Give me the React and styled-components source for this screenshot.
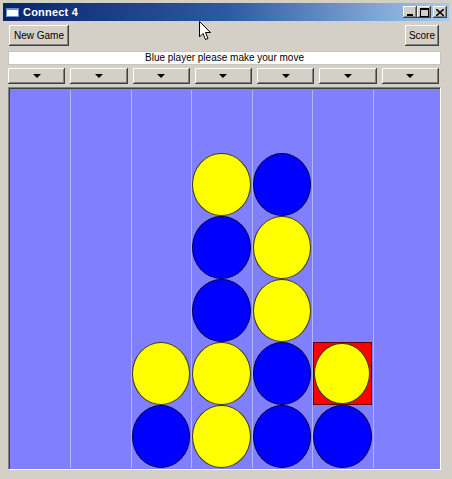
import React from "react";
import styled, { createGlobalStyle } from "styled-components";

const GlobalStyle = createGlobalStyle`
  html, body {
    margin: 0;
    padding: 0;
    background: #d4d0c8;
  }
  body {
    font-family: "Liberation Sans", Arial, sans-serif;
    font-size: 10px;
  }
`;

const Window = styled.div`
  position: relative;
  width: 452px;
  height: 479px;
  box-sizing: border-box;
  background: #d4d0c8;
  padding: 3px 3px 0 3px;
  overflow: hidden;
`;

const TitleBar = styled.div`
  height: 18px;
  display: flex;
  align-items: center;
  padding: 0 2px 0 3px;
  background: linear-gradient(to right, #0a246a 0%, #2c5aa0 50%, #a6caf0 100%);
  color: #fff;
`;

const AppIcon = styled.span`
  width: 13px;
  height: 9px;
  box-sizing: border-box;
  background: #fff;
  border: 1px solid #6b8fd1;
  border-top-width: 2px;
  margin-right: 4px;
`;

const Caption = styled.span`
  flex: 1;
  font-family: "Liberation Sans", Arial, sans-serif;
  font-weight: bold;
  font-size: 11px;
  letter-spacing: 0.2px;
`;

const CapButton = styled.span`
  width: 14px;
  height: 12px;
  margin-left: ${(p) => (p.$gap ? 2 : 0)}px;
  display: flex;
  align-items: center;
  justify-content: center;
  background: #d4d0c8;
  box-shadow: inset -1px -1px #404040, inset 1px 1px #fff, inset -2px -2px #808080;
`;

const Content = styled.div`
  padding: 4px 8px 0 5px;
  display: flex;
  flex-direction: column;
`;

const Toolbar = styled.div`
  display: flex;
  justify-content: space-between;
  padding: 0 2px 0 1px;
  height: 21px;
`;

const Button = styled.button`
  height: 21px;
  padding: 0 ${(p) => (p.$narrow ? 4 : 5)}px;
  border: none;
  background: #d4d0c8;
  font-family: "Liberation Sans", Arial, sans-serif;
  font-size: 10px;
  color: #000;
  box-shadow: inset -1px -1px #404040, inset 1px 1px #fff, inset -2px -2px #808080;
`;

const Status = styled.div`
  margin-top: 5px;
  height: 14px;
  background: #fff;
  border: 1px solid #c8c5bd;
  box-sizing: border-box;
  display: flex;
  align-items: center;
  justify-content: center;
  line-height: 12px;
  font-size: 10px;
`;

const DropRow = styled.div`
  margin-top: 3px;
  display: grid;
  grid-template-columns: repeat(7, 1fr);
  gap: 5px;
  padding-right: 2px;
`;

const DropButton = styled.button`
  height: 16px;
  border: none;
  padding: 0;
  background: #d4d0c8;
  display: flex;
  align-items: center;
  justify-content: center;
  box-shadow: inset -1px -1px #404040, inset 1px 1px #fff, inset -2px -2px #808080;
`;

const Arrow = styled.span`
  width: 0;
  height: 0;
  border-left: 4px solid transparent;
  border-right: 4px solid transparent;
  border-top: 4px solid #000;
`;

const Board = styled.div`
  margin-top: 3px;
  height: 383px;
  box-sizing: border-box;
  border-top: 1px solid #808080;
  border-left: 1px solid #808080;
  border-right: 1px solid #fff;
  border-bottom: 1px solid #fff;
  box-shadow: inset 1px 1px #404040;
  padding: 2px 7px 1px 1px;
  background: #8080ff;
  display: grid;
  grid-template-columns: repeat(7, 1fr);
  grid-template-rows: repeat(6, 1fr);
  grid-auto-flow: column;
`;

const Cell = styled.div`
  position: relative;
  border-left: ${(p) => (p.$first ? "none" : "1px solid #b4b4ff")};
  display: flex;
  align-items: stretch;
  justify-content: stretch;
`;

const Highlight = styled.div`
  flex: 1;
  display: flex;
  background: #ff0000;
  border: 1px solid #600;
  margin: 0 1px 0 0;
`;

const Piece = styled.div`
  flex: 1;
  border-radius: 50%;
  box-sizing: border-box;
  border: 1px solid ${(p) => (p.$color === "yellow" ? "#3a3a10" : "#000050")};
  background: ${(p) => (p.$color === "yellow" ? "#ffff00" : "#0000ff")};
  margin: 0 1px 0 0;
`;

const Cursor = styled.svg`
  position: absolute;
  left: 199px;
  top: 21px;
`;

// columns from left, rows from top
const board = [
  [null, null, null, null, null, null],
  [null, null, null, null, null, null],
  [null, null, null, null, "yellow", "blue"],
  [null, "yellow", "blue", "blue", "yellow", "yellow"],
  [null, "blue", "yellow", "yellow", "blue", "blue"],
  [null, null, null, null, "yellow", "blue"],
  [null, null, null, null, null, null],
];

const highlighted = "5-4";

export default function App() {
  return (
    <Window>
      <GlobalStyle />
      <TitleBar>
        <AppIcon />
        <Caption>Connect 4</Caption>
        <CapButton>
          <svg width="8" height="8" viewBox="0 0 8 8">
            <rect x="1" y="6" width="6" height="2" fill="#000" />
          </svg>
        </CapButton>
        <CapButton>
          <svg width="9" height="9" viewBox="0 0 9 9">
            <rect x="0.5" y="0.5" width="8" height="8" fill="none" stroke="#000" />
            <rect x="0" y="0" width="9" height="2" fill="#000" />
          </svg>
        </CapButton>
        <CapButton $gap>
          <svg width="8" height="7" viewBox="0 0 8 7">
            <path d="M0 0 L8 7 M8 0 L0 7" stroke="#000" strokeWidth="1.6" />
          </svg>
        </CapButton>
      </TitleBar>
      <Content>
        <Toolbar>
          <Button>New Game</Button>
          <Button $narrow>Score</Button>
        </Toolbar>
        <Status>Blue player please make your move</Status>
        <DropRow>
          {board.map((_, i) => (
            <DropButton key={i}>
              <Arrow />
            </DropButton>
          ))}
        </DropRow>
        <Board>
          {board.map((col, c) =>
            col.map((piece, r) => (
              <Cell key={`${c}-${r}`} $first={c === 0}>
                {piece &&
                  (highlighted === `${c}-${r}` ? (
                    <Highlight>
                      <Piece $color={piece} />
                    </Highlight>
                  ) : (
                    <Piece $color={piece} />
                  ))}
              </Cell>
            ))
          )}
        </Board>
      </Content>
      <Cursor width="13" height="20" viewBox="0 0 13 20">
        <path
          d="M0.5 0.5 L0.5 16 L4 12.5 L6.5 18.5 L9 17.5 L6.5 11.5 L11.5 11.5 Z"
          fill="#fff"
          stroke="#000"
          strokeWidth="1"
        />
      </Cursor>
    </Window>
  );
}
